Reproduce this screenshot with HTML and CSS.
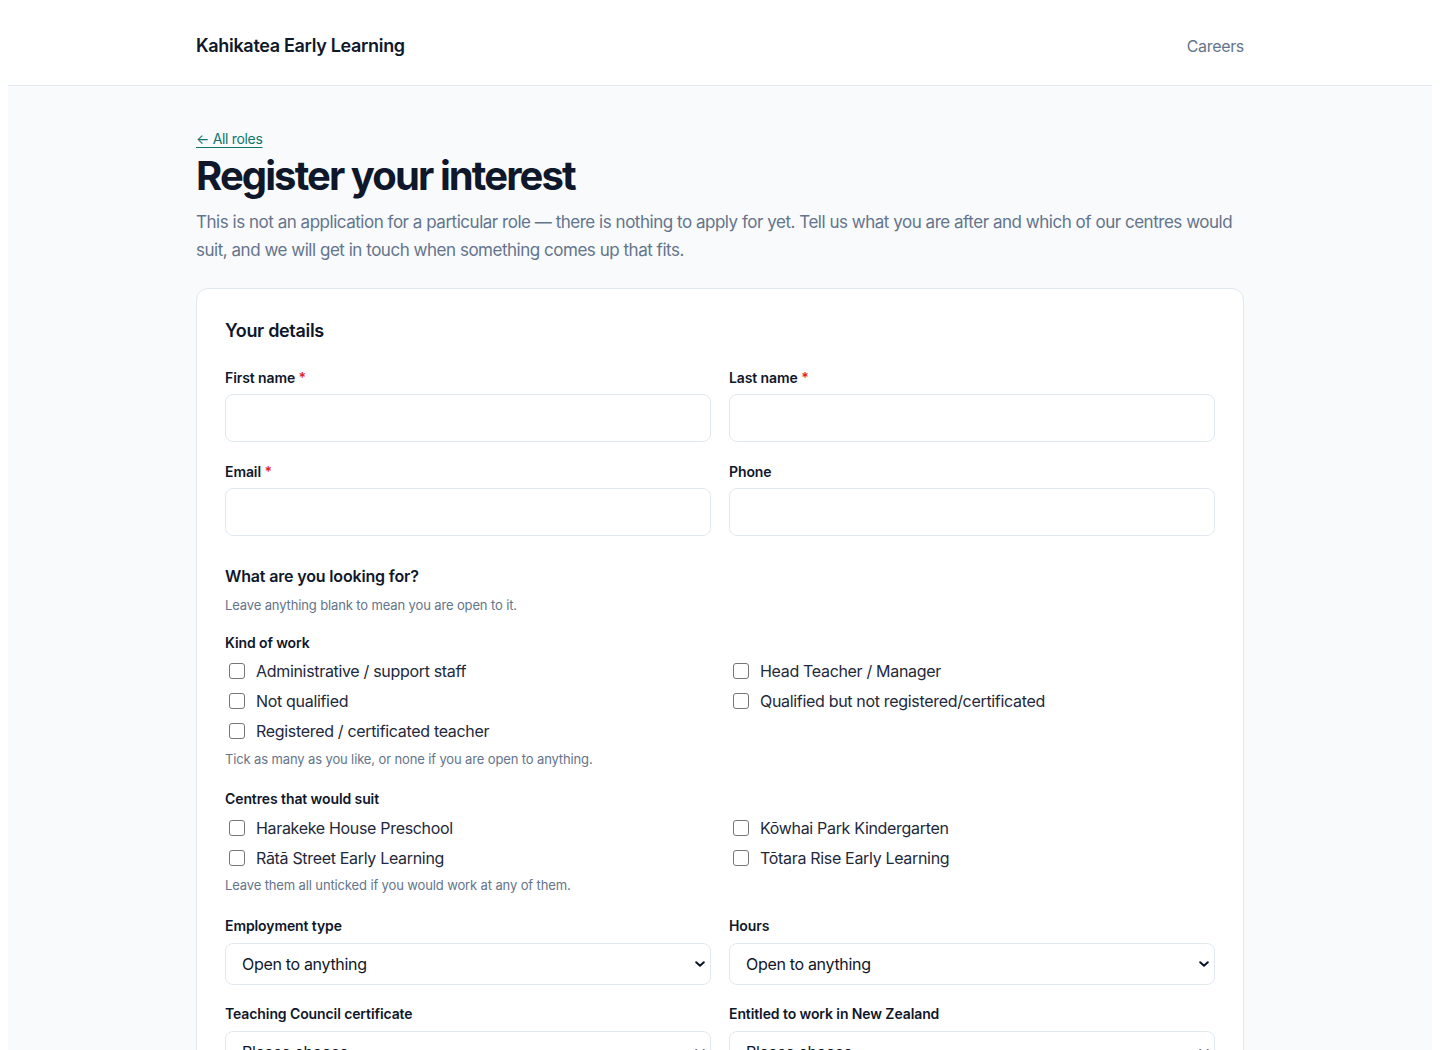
FILE: index.html
```html
<!DOCTYPE html>
<html lang="en">
<head>
    <meta charset="UTF-8">
    <meta name="viewport" content="width=device-width, initial-scale=1.0">
    <title>Register your interest - Kahikatea Early Learning</title>
    <link rel="stylesheet" href="styles.css">
</head>
<body>
    <header class="site_header">
        <div class="wrap header_row">
            <a class="brand" href="#">Kahikatea Early Learning</a>
            <nav><a class="nav_link" href="#">Careers</a></nav>
        </div>
    </header>
    <main class="page">
        <div class="wrap">
            <a class="back_link" href="#">&larr; All roles</a>
            <h1>Register your interest</h1>
            <p class="lead">This is not an application for a particular role — there is nothing to apply for yet. Tell us what you are after and which of our centres would suit, and we will get in touch when something comes up that fits.</p>

            <form class="card">
                <h2>Your details</h2>
                <div class="field_grid">
                    <div class="field">
                        <label for="first_name">First name <span class="req">*</span></label>
                        <input type="text" id="first_name">
                    </div>
                    <div class="field">
                        <label for="last_name">Last name <span class="req">*</span></label>
                        <input type="text" id="last_name">
                    </div>
                    <div class="field">
                        <label for="email">Email <span class="req">*</span></label>
                        <input type="email" id="email">
                    </div>
                    <div class="field">
                        <label for="phone">Phone</label>
                        <input type="tel" id="phone">
                    </div>
                </div>

                <h3>What are you looking for?</h3>
                <p class="hint">Leave anything blank to mean you are open to it.</p>

                <div class="group">
                    <div class="group_label">Kind of work</div>
                    <div class="check_grid">
                        <label class="check"><input type="checkbox"> Administrative / support staff</label>
                        <label class="check"><input type="checkbox"> Head Teacher / Manager</label>
                        <label class="check"><input type="checkbox"> Not qualified</label>
                        <label class="check"><input type="checkbox"> Qualified but not registered/certificated</label>
                        <label class="check"><input type="checkbox"> Registered / certificated teacher</label>
                    </div>
                    <p class="hint">Tick as many as you like, or none if you are open to anything.</p>
                </div>

                <div class="group">
                    <div class="group_label">Centres that would suit</div>
                    <div class="check_grid">
                        <label class="check"><input type="checkbox"> Harakeke House Preschool</label>
                        <label class="check"><input type="checkbox"> Kōwhai Park Kindergarten</label>
                        <label class="check"><input type="checkbox"> Rātā Street Early Learning</label>
                        <label class="check"><input type="checkbox"> Tōtara Rise Early Learning</label>
                    </div>
                    <p class="hint">Leave them all unticked if you would work at any of them.</p>
                </div>

                <div class="field_grid selects">
                    <div class="field">
                        <label for="employment">Employment type</label>
                        <select id="employment">
                            <option>Open to anything</option>
                            <option>Permanent</option>
                            <option>Fixed term</option>
                            <option>Relief</option>
                        </select>
                    </div>
                    <div class="field">
                        <label for="hours">Hours</label>
                        <select id="hours">
                            <option>Open to anything</option>
                            <option>Full time</option>
                            <option>Part time</option>
                        </select>
                    </div>
                    <div class="field">
                        <label for="certificate">Teaching Council certificate</label>
                        <select id="certificate">
                            <option>Please choose</option>
                            <option>Yes</option>
                            <option>No</option>
                        </select>
                    </div>
                    <div class="field">
                        <label for="entitled">Entitled to work in New Zealand</label>
                        <select id="entitled">
                            <option>Please choose</option>
                            <option>Yes</option>
                            <option>No</option>
                        </select>
                    </div>
                </div>
            </form>
        </div>
    </main>
</body>
</html>
```

FILE: styles.css
```css
body {
    font-family: Inter, "Noto Sans", Arial, sans-serif;
    color: #0f172a;
    background: #ffffff;
    margin: 8px;
    letter-spacing: -0.02em;
}

a {
    text-decoration: none;
}

.wrap {
    max-width: 1048px;
    margin: 0 auto;
}

.site_header {
    background: #ffffff;
    border-bottom: 1px solid #e2e8f0;
    padding: 24px 0 25px;
}

.header_row {
    display: flex;
    justify-content: space-between;
    align-items: center;
    line-height: 28px;
}

.brand {
    font-size: 18px;
    font-weight: 600;
    color: #0f172a;
}

.nav_link {
    font-size: 16px;
    color: #64748b;
}

.page {
    background: #f8fafc;
    padding: 42px 0 48px;
    min-height: 1000px;
}

.back_link {
    display: inline-block;
    font-size: 14px;
    line-height: 20px;
    color: #0f766e;
    text-decoration: underline;
    text-underline-offset: 3px;
}

h1 {
    font-size: 40px;
    line-height: 48px;
    font-weight: 700;
    letter-spacing: -1.9px;
    margin: 3px 0 8px;
}

.lead {
    font-size: 17px;
    line-height: 28px;
    color: #64748b;
    letter-spacing: -0.028em;
    margin: 0 0 24px;
}

.card {
    background: #ffffff;
    border: 1px solid #e2e8f0;
    border-radius: 12px;
    padding: 30px 28px 28px;
}

.card h2 {
    font-size: 18px;
    line-height: 24px;
    font-weight: 600;
    margin: 0 0 25px;
}

.card h3 {
    font-size: 16px;
    line-height: 24px;
    font-weight: 600;
    letter-spacing: -0.01em;
    margin: 28px 0 8px;
}

.field_grid {
    display: grid;
    grid-template-columns: 1fr 1fr;
    column-gap: 18px;
    row-gap: 20px;
}

.field label,
.group_label {
    display: block;
    font-size: 14px;
    line-height: 20px;
    font-weight: 600;
    letter-spacing: -0.1px;
    margin-bottom: 6px;
}

.group_label {
    margin-bottom: 3px;
}

.req {
    color: #dc2626;
}

.field input,
.field select {
    display: block;
    width: 100%;
    box-sizing: border-box;
    border: 1px solid #e2e8f0;
    border-radius: 8px;
    background: #ffffff;
    font-family: inherit;
    font-size: 16px;
    letter-spacing: -0.02em;
    color: #0f172a;
}

.field input {
    height: 48px;
    padding: 0 14px;
}

.field select {
    height: 42px;
    padding: 0 32px 0 16px;
    appearance: none;
    background-image: url("data:image/svg+xml;utf8,<svg xmlns='http://www.w3.org/2000/svg' width='10' height='6' viewBox='0 0 10 6'><path d='M1.2 1.2 5 4.8 8.8 1.2' fill='none' stroke='%230f172a' stroke-width='2' stroke-linecap='round' stroke-linejoin='round'/></svg>");
    background-repeat: no-repeat;
    background-position: right 5px center;
}

.selects .field label {
    margin-bottom: 7px;
}

.hint {
    font-size: 13px;
    line-height: 18px;
    color: #64748b;
    letter-spacing: -0.01em;
    margin: 0;
}

.group {
    margin-top: 19px;
}

.group + .group {
    margin-top: 21px;
}

.group + .group .group_label {
    margin-bottom: 4px;
}

.check_grid {
    display: grid;
    grid-template-columns: 1fr 1fr;
    column-gap: 18px;
    margin-bottom: 4px;
}

.group + .group .check_grid {
    margin-bottom: 3px;
}

.check {
    display: flex;
    align-items: center;
    height: 30px;
    font-size: 16px;
    color: #1e293b;
}

.check input {
    appearance: none;
    width: 16px;
    height: 16px;
    margin: 0 11px 0 4px;
    border: 1px solid #767676;
    border-radius: 3px;
    background: #ffffff;
}

.check input:checked {
    background: #0f766e;
    border-color: #0f766e;
}

.selects {
    margin-top: 22px;
    row-gap: 19px;
}
```
